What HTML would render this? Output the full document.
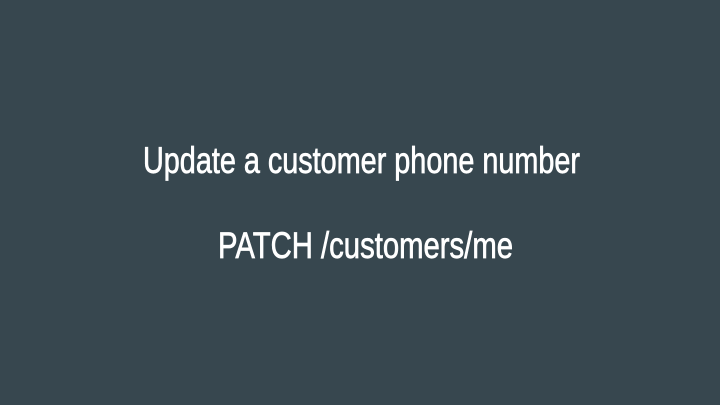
<!DOCTYPE html>
<html><head><meta charset="utf-8"><style>
html,body{margin:0;padding:0;background:#37474f;width:720px;height:405px;overflow:hidden}
svg{display:block}
</style></head><body>
<svg width="720" height="405" xmlns="http://www.w3.org/2000/svg">
<rect width="720" height="405" fill="#37474f"/>
<text x="143" y="173" font-family="Liberation Sans, sans-serif" font-size="37" fill="#ffffff" stroke="#ffffff" stroke-width="0.7" textLength="437" lengthAdjust="spacingAndGlyphs">Update a customer phone number</text>
<text x="218" y="258" font-family="Liberation Sans, sans-serif" font-size="37" fill="#ffffff" stroke="#ffffff" stroke-width="0.7" textLength="295" lengthAdjust="spacingAndGlyphs">PATCH /customers/me</text>
</svg>
</body></html>
